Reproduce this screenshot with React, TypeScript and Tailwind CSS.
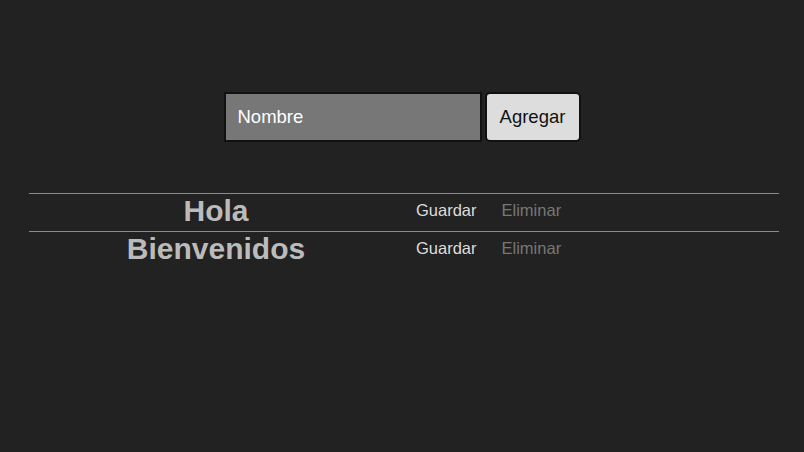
import { useState } from "react"

const font = { fontFamily: '"Liberation Sans", Arial, sans-serif' }

export default function App() {
    const [items] = useState(["Hola", "Bienvenidos"])

    return (
        <div style={font} className="min-h-screen w-full bg-[#222222] flex flex-col items-center pt-[92px]">
            {/* form */}
            <div className="flex gap-[3px]">
                <input
                    placeholder="Nombre"
                    className="w-[258px] h-[50px] border-2 border-[#111] bg-[#777777] px-[12px] text-[18.5px] text-white placeholder:text-white outline-none"
                />
                <button className="w-[96px] h-[50px] border-2 border-[#111] rounded-[5px] bg-[#dddddd] text-[18.5px] text-[#111]">
                    Agregar
                </button>
            </div>

            {/* list */}
            <div className="mt-[51px] ml-[4px] w-[750px] flex flex-col">
                {items.map((item) => (
                    <div key={item} className="border-t border-[#7c85d6] h-[38px] pb-[4px] flex items-center">
                        <h2 className="w-[374px] text-center text-[30px] font-bold leading-none text-[#bbbbbb]">
                            {item}
                        </h2>
                        <button className="ml-[13px] text-[16.5px] text-[#dddddd]">Guardar</button>
                        <button className="ml-[25px] text-[16.5px] text-[#777777]">Eliminar</button>
                    </div>
                ))}
            </div>
        </div>
    )
}
